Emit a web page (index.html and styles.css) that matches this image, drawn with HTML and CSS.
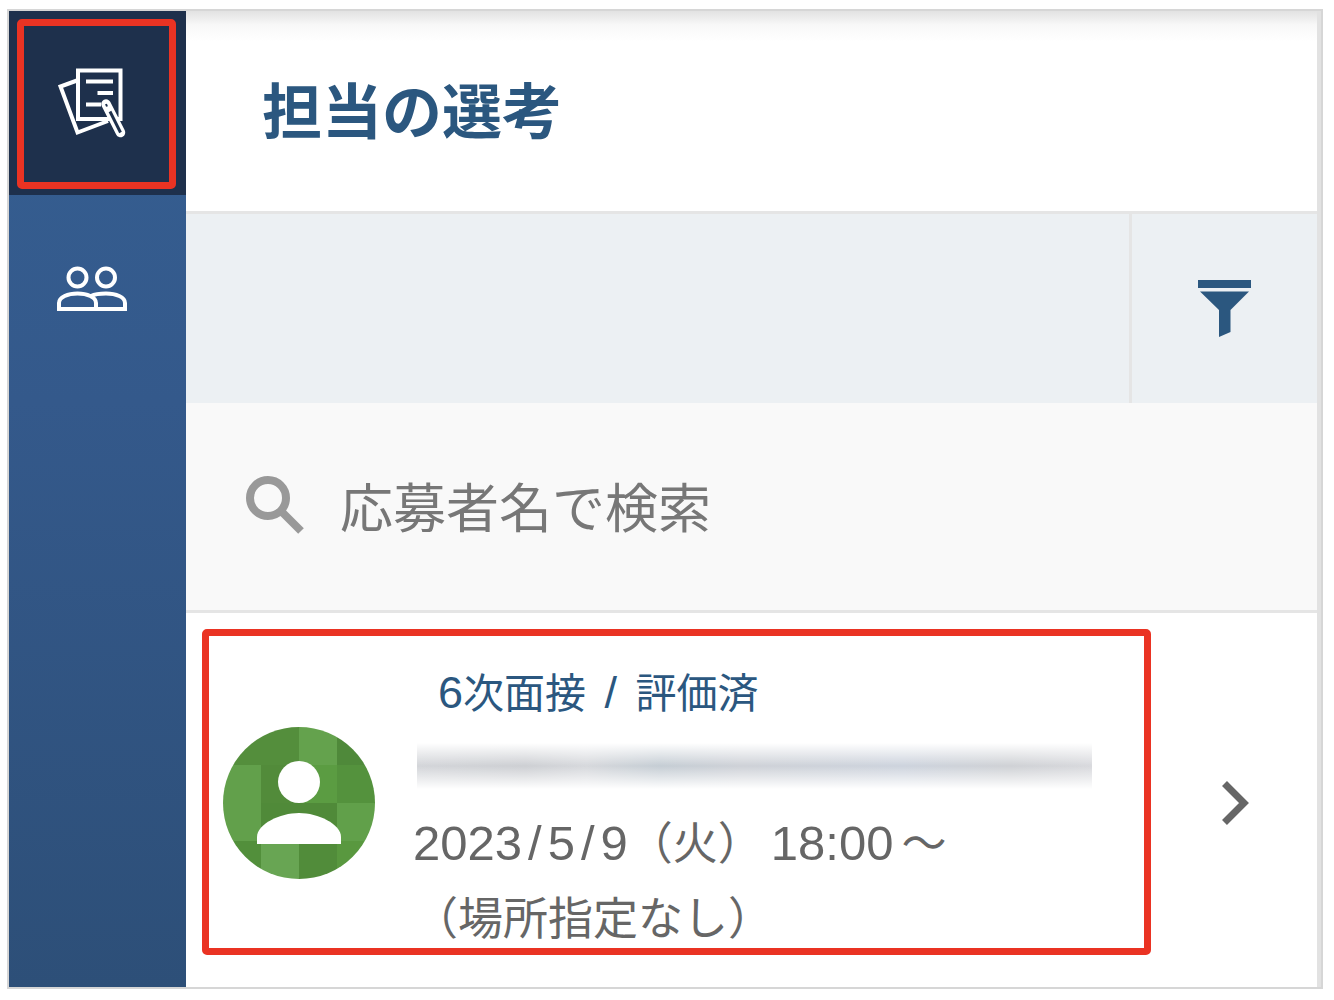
FILE: index.html
```html
<!DOCTYPE html>
<html lang="ja">

<head>
	<meta charset="utf-8">
	<title>担当の選考</title>
	<link rel="stylesheet" href="styles.css">
</head>

<body>
	<div class="window">
		<nav class="sidebar">
			<a class="navItem active marked" href="#" aria-label="担当の選考">
				<svg width="72" height="76" viewBox="56 64 72 76" fill="none" stroke="#fff" stroke-width="4">
					<path d="M77 79.500L60.500 85.500L77.500 131.500L108 120" />
					<rect x="78" y="69.500" width="42.500" height="48.500" />
					<path d="M86 80.500H113M97.500 92H113M86 103.500H101" />
					<path d="M106 103L120.500 131.500" stroke-width="9.500" stroke-linecap="round" />
					<path d="M110 110.500L120.500 131.500" stroke="#1e304c" stroke-width="3" />
					<path d="M106 103L107 105.500" stroke="#1e304c" stroke-width="2" />
				</svg>
			</a>
			<a class="navItem" href="#" aria-label="応募者">
				<svg width="72" height="48" viewBox="56 266 72 48" fill="none" stroke="#fff" stroke-width="4">
					<circle cx="77.500" cy="278.500" r="9" />
					<circle cx="106" cy="278.500" r="9" />
					<path d="M59 310V304C59 298 68 294.500 77.500 294.500S96 298 96 304V310Z" />
					<path d="M91 297C95 295 100 294.500 106 294.500C116 294.500 125 298 125 304V310H96" />
				</svg>
			</a>
		</nav>

		<main class="panel">
			<header class="panelHeader">
				<h1>担当の選考</h1>
			</header>

			<div class="toolbar">
				<button class="filterButton" type="button" aria-label="絞り込み">
					<svg width="53" height="57" viewBox="0 0 53 57" fill="#2b577f">
						<path d="M0 0H53V8H0Z" />
						<path d="M2 11.500H51L32.500 30V52L21 57V30Z" />
					</svg>
				</button>
			</div>

			<form class="search">
				<label for="searchName" aria-label="応募者名で検索">
					<svg width="58" height="58" viewBox="0 0 58 58" fill="none" stroke="#999" stroke-width="8">
						<circle cx="22" cy="22" r="18" />
						<path d="M35 35L55 55" />
					</svg>
				</label>
				<input id="searchName" type="text" placeholder="応募者名で検索">
			</form>

			<ul class="list">
				<li>
					<a class="entry" href="#">
						<div class="entryMain marked">
							<svg class="avatar" width="152" height="152" viewBox="0 0 152 152">
								<path fill="#548e3c" d="M0 0H76V38H0Z" />
								<path fill="#64a24d" d="M76 0H114V38H76Z" />
								<path fill="#4f893a" d="M114 0H152V38H114Z" />
								<path fill="#62a04b" d="M0 38H38V114H0Z" />
								<path fill="#528b3a" d="M38 38H76V76H38Z" />
								<path fill="#5b9c42" d="M76 38H114V76H76Z" />
								<path fill="#54923d" d="M114 38H152V76H114Z" />
								<path fill="#508a39" d="M38 76H114V114H38Z" />
								<path fill="#61a04a" d="M114 76H152V114H114Z" />
								<path fill="#528f3b" d="M0 114H38V152H0Z" />
								<path fill="#68a553" d="M38 114H76V152H38Z" />
								<path fill="#518c3a" d="M76 114H114V152H76Z" />
								<path fill="#59983f" d="M114 114H152V152H114Z" />
								<circle cx="76" cy="55" r="21" fill="#fff" />
								<path fill="#fff" d="M34 117V110C34 97 57 86 76 86S118 97 118 110V117Z" />
							</svg>
							<div class="entryText">
								<p class="status"><span class="num">6</span>次面接<span class="num"> <span class="slash">/</span> </span>評価済</p>
								<p class="name"><span class="masked"></span></p>
								<p><span class="num">2023<span class="slash">/</span>5<span class="slash">/</span>9</span>（火）<span class="num time">18:00</span>～</p>
								<p>（場所指定なし）</p>
							</div>
						</div>
						<svg class="chevron" width="30" height="46" viewBox="0 0 30 46" fill="none" stroke="#666" stroke-width="7">
							<path d="M3.500 3.500L23 23L3.500 42.500" />
						</svg>
					</a>
				</li>
			</ul>
		</main>
	</div>
</body>

</html>
```
FILE: styles.css
```css
* {
	box-sizing: border-box;
}

body {
	margin: 0;
	padding: 9px 11px 11px 7px;
	min-height: 100vh;
	display: flex;
	background-color: white;
	font-family: "Noto Sans CJK JP", sans-serif;
	color: #666;
}

h1, p, ul {
	margin: 0;
	padding: 0;
}

svg {
	display: block;
	flex: none;
}

.window {
	flex: 1;
	display: flex;
	border: 2px solid #d6d6d6;
}

/* red frame round the parts to look at */
.marked {
	position: relative;
}

.marked::after {
	content: "";
	position: absolute;
	inset: 0;
	border: 7px solid #ea3323;
	border-radius: 5px;
}

/* sidebar */
.sidebar {
	flex: none;
	width: 177px;
	background: linear-gradient(#355f92, #34598b 40%, #2d4f78);
}

.navItem {
	display: flex;
	align-items: center;
	justify-content: center;
	height: 184px;
	padding: 4px 12px 0 0;
}

.navItem.active {
	padding-top: 0;
	background-color: #1e304c;
}

.navItem.marked::after {
	inset: 8px 10px 6px 8px;
}

/* panel */
.panel {
	flex: 1;
	min-width: 0;
	border-right: 4px solid #e2e2e2;
}

.panelHeader {
	display: flex;
	align-items: center;
	height: 203px;
	padding: 0 0 6px 76px;
	border-bottom: 3px solid #e5e5e5;
	background: linear-gradient(#e2e2e2, #f8f8f8 14px, white 30px);
}

h1 {
	font-size: 60px;
	line-height: 80px;
	font-weight: bold;
	color: #2b577f;
}

.toolbar {
	display: flex;
	justify-content: flex-end;
	height: 189px;
	background-color: #ecf0f3;
}

.filterButton {
	display: flex;
	align-items: center;
	justify-content: center;
	width: 188px;
	padding: 0;
	border: none;
	border-left: 3px solid #e5e5e5;
	background: none;
}

.search {
	display: flex;
	align-items: center;
	gap: 36px;
	height: 210px;
	padding: 0 60px 4px;
	border-bottom: 3px solid #e5e5e5;
	background-color: #f9f9f9;
}

.search input {
	flex: 1;
	min-width: 0;
	height: 80px;
	padding: 0;
	border: none;
	background: none;
	font-family: inherit;
	font-size: 53px;
	color: #666;
}

.search input::placeholder {
	color: #777;
}

/* list */
.list {
	list-style: none;
}

.entry {
	display: flex;
	align-items: center;
	padding: 16px 66px 32px 16px;
	color: inherit;
	text-decoration: none;
}

.entryMain {
	flex: 1;
	min-width: 0;
	display: flex;
	align-items: center;
	gap: 38px;
	margin-right: 70px;
	padding: 24px 59px 2px 21px;
}

.avatar {
	border-radius: 50%;
}

.chevron {
	margin-top: 22px;
}

.entryText {
	flex: 1;
	min-width: 0;
	font-size: 45px;
	line-height: 75px;
	white-space: nowrap;
}

/* figures are set a little larger than the kana and kanji */
.num {
	font-family: "Liberation Sans", sans-serif;
	font-size: 49px;
	line-height: 1;
}

.slash {
	margin: 0 6px;
}

.time {
	margin: 0 8px;
}

.status {
	padding-left: 25px;
	font-size: 41px;
	color: #2b577f;
}

.status .num {
	font-size: 45px;
}

.name {
	display: flex;
	align-items: center;
	height: 75px;
	padding-left: 4px;
}

.masked {
	flex: 1;
	height: 46px;
	background: linear-gradient(white, rgba(255, 255, 255, 0) 50%, white), linear-gradient(90deg, #d3d5d9, #cdcfd3 16%, #d6d8dc 25%, #c5cdd4 36%, #ced1d7 48%, #cdd3dd 72%, #cfd1d5 88%, #d8d9dd);
}
```
